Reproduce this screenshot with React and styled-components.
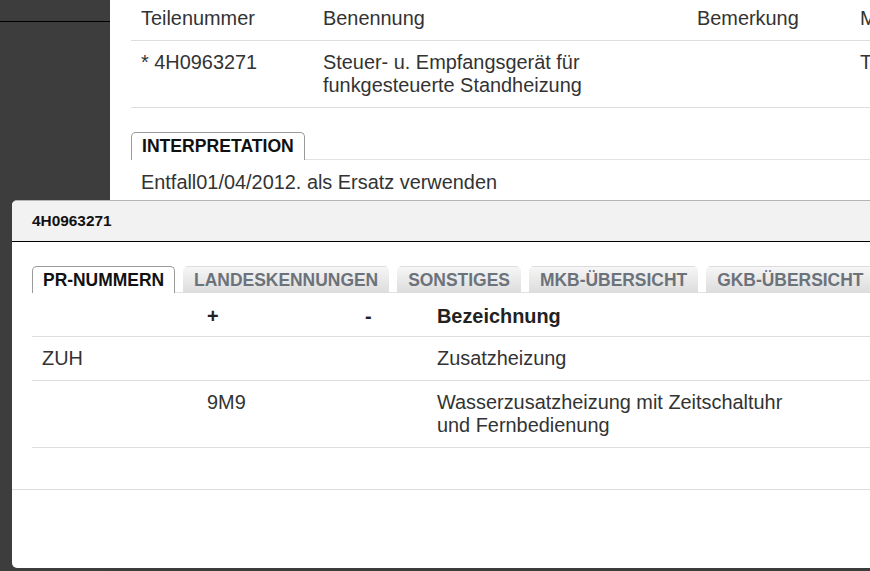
import React from 'react';
import styled, { createGlobalStyle } from 'styled-components';

const GlobalStyle = createGlobalStyle`
    html, body {
        margin: 0;
        padding: 0;
        background: #3c3c3c;
        overflow: hidden;
    }
    body {
        font-family: "Liberation Sans", Arial, sans-serif;
        color: #333;
    }
    * {
        box-sizing: border-box;
    }
`;

const parts = [
    { number: "* 4H0963271", name: ["Steuer- u. Empfangsgerät für", "funkgesteuerte Standheizung"], remark: "", extra: "T" },
];

const prRows = [
    { code: "ZUH", plus: "", minus: "", label: ["Zusatzheizung"] },
    { code: "", plus: "9M9", minus: "", label: ["Wasserzusatzheizung mit Zeitschaltuhr", "und Fernbedienung"] },
];

const tabs = ["PR-NUMMERN", "LANDESKENNUNGEN", "SONSTIGES", "MKB-ÜBERSICHT", "GKB-ÜBERSICHT"];

const Page = styled.div`
    position: relative;
    display: flex;
    width: 870px;
    height: 571px;
    overflow: hidden;
`;

const Sidebar = styled.div`
    width: 110px;
    flex-shrink: 0;
    background: #3d3d3d;

    .bar {
        height: 22px;
        border-bottom: 1px solid #000;
    }
`;

const Main = styled.div`
    flex: 1;
    height: 568px;
    background: #fff;
    padding-left: 21px;
    overflow: hidden;
`;

const Table = styled.table`
    border-collapse: collapse;
    table-layout: fixed;
    width: ${props => props.width}px;
    font-size: 19.9px;
    line-height: 23px;
    color: #333;

    th, td {
        text-align: left;
        vertical-align: top;
        padding: 10px;
        border-bottom: 1px solid #dedede;
        font-weight: normal;
        white-space: nowrap;
    }
`;

const HeadCell = styled.th`
    && {
        padding: ${props => props.pad || "7px 10px 10px"};
        font-weight: ${props => (props.bold ? "bold" : "normal")};
        color: ${props => (props.bold ? "#222" : "#333")};
    }
`;

const TabStrip = styled.div`
    display: flex;
    gap: 8px;
    margin-top: ${props => props.top || 0}px;
    border-bottom: 1px solid #e2e2e2;
`;

const Tab = styled.div`
    height: ${props => props.h || 28}px;
    padding: 0 10px;
    display: flex;
    align-items: center;
    font-size: ${props => props.size || 17.45}px;
    font-weight: bold;
    border-radius: 5px 5px 0 0;
    margin-bottom: -1px;
    white-space: nowrap;
    color: ${props => (props.active ? "#111" : "#6c727a")};
    background: ${props => (props.active ? "#fff" : "linear-gradient(#f6f6f6, #dcdcdc)")};
    border: 1px solid ${props => (props.active ? "#9a9a9a" : "transparent")};
    border-bottom: none;
`;

const Note = styled.div`
    padding: 11px 10px;
    font-size: 19.9px;
    line-height: 23px;
    color: #333;
`;

const Modal = styled.div`
    position: absolute;
    left: 12px;
    top: 200px;
    width: 890px;
    height: 368px;
    background: #fff;
    border-radius: 5px;
    border-top: 1px solid #b5b5b5;
    display: flex;
    flex-direction: column;
    overflow: hidden;
`;

const ModalHeader = styled.div`
    height: 41px;
    flex-shrink: 0;
    background: #f2f2f2;
    border-bottom: 1px solid #000;
    padding: 0 20px;
    display: flex;
    align-items: center;
    font-size: 15.4px;
    font-weight: bold;
    color: #111;
`;

const ModalBody = styled.div`
    flex: 1;
    padding: 24px 0 0 20px;
`;

const ModalFooter = styled.div`
    height: 79px;
    flex-shrink: 0;
    border-top: 1px solid #dedede;
`;

const Lines = ({ lines }) => lines.map((line, i) => <div key={i}>{line}</div>);

export default function App() {
    return (
        <>
            <GlobalStyle />
            <Page>
                <Sidebar>
                    <div className="bar" />
                </Sidebar>
                <Main>
                    <Table width={800}>
                        <colgroup>
                            <col style={{ width: 182 }} />
                            <col style={{ width: 374 }} />
                            <col style={{ width: 163 }} />
                            <col />
                        </colgroup>
                        <thead>
                            <tr>
                                <HeadCell>Teilenummer</HeadCell>
                                <HeadCell>Benennung</HeadCell>
                                <HeadCell>Bemerkung</HeadCell>
                                <HeadCell>M</HeadCell>
                            </tr>
                        </thead>
                        <tbody>
                            {parts.map((p, i) => (
                                <tr key={i}>
                                    <td>{p.number}</td>
                                    <td><Lines lines={p.name} /></td>
                                    <td>{p.remark}</td>
                                    <td>{p.extra}</td>
                                </tr>
                            ))}
                        </tbody>
                    </Table>
                    <TabStrip top={24}>
                        <Tab active size={17.6}>INTERPRETATION</Tab>
                    </TabStrip>
                    <Note>Entfall01/04/2012. als Ersatz verwenden</Note>
                </Main>
                <Modal>
                    <ModalHeader>4H0963271</ModalHeader>
                    <ModalBody>
                        <TabStrip>
                            {tabs.map((t, i) => (
                                <Tab key={t} active={i === 0} h={27}>{t}</Tab>
                            ))}
                        </TabStrip>
                        <Table width={870}>
                            <colgroup>
                                <col style={{ width: 165 }} />
                                <col style={{ width: 158 }} />
                                <col style={{ width: 72 }} />
                                <col />
                            </colgroup>
                            <thead>
                                <tr>
                                    <HeadCell bold pad="12px 10px 8px"></HeadCell>
                                    <HeadCell bold pad="12px 10px 8px">+</HeadCell>
                                    <HeadCell bold pad="12px 10px 8px">-</HeadCell>
                                    <HeadCell bold pad="12px 10px 8px">Bezeichnung</HeadCell>
                                </tr>
                            </thead>
                            <tbody>
                                {prRows.map((r, i) => (
                                    <tr key={i}>
                                        <td>{r.code}</td>
                                        <td>{r.plus}</td>
                                        <td>{r.minus}</td>
                                        <td><Lines lines={r.label} /></td>
                                    </tr>
                                ))}
                            </tbody>
                        </Table>
                    </ModalBody>
                    <ModalFooter />
                </Modal>
            </Page>
        </>
    );
}
